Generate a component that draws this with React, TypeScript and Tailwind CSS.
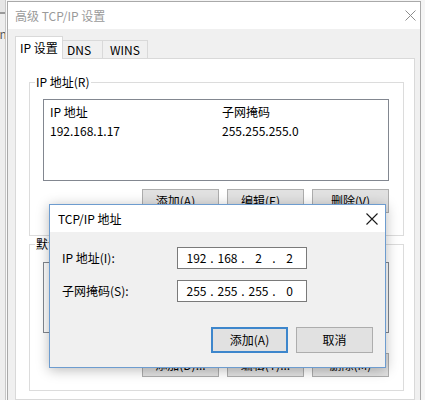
import React from "react";

function XIcon({ size, color, sw }: { size: number; color: string; sw: number }) {
  return (
    <svg width={size} height={size} viewBox={`0 0 ${size} ${size}`}>
      <path d={`M0.5 0.5L${size - 0.5} ${size - 0.5}M${size - 0.5} 0.5L0.5 ${size - 0.5}`} stroke={color} strokeWidth={sw} fill="none" />
    </svg>
  );
}

function Btn({ label, cls = "" }: { label: string; cls?: string }) {
  return (
    <div className={`w-[77px] h-[24px] flex items-center justify-center bg-[#e1e1e1] border border-[#adadad] text-black ${cls}`}>
      {label}
    </div>
  );
}

function IpField({ parts }: { parts: string[] }) {
  return (
    <div className="w-[130px] h-[22px] bg-white border border-[#7a7a7a] flex items-center pl-[6px] text-black">
      {parts.map((p, i) => (
        <React.Fragment key={i}>
          {i > 0 && <span className="w-[6px] text-center">.</span>}
          <span className="w-[25px] text-center">{p}</span>
        </React.Fragment>
      ))}
    </div>
  );
}

export default function App() {
  return (
    <div className="w-[425px] h-[400px] overflow-hidden relative flex bg-[#f5f5f5] text-[12px] leading-[16px] font-['Microsoft_YaHei_UI','Noto_Sans_CJK_SC',sans-serif] text-black">
      {/* background window sliver */}
      <div className="w-[7px] shrink-0 flex overflow-hidden">
        <div className="w-[5px] flex flex-col bg-[#eeeeee]">
          <div className="h-[12px] bg-[#e6e6e6]" />
          <div className="h-[2px] bg-[#9a9a9a]" />
          <div className="mt-[12px] -ml-[4px] text-[#555] whitespace-nowrap">In</div>
        </div>
        <div className="w-[1px] bg-[#c8c8c8]" />
        <div className="w-[1px] bg-[#fafafa]" />
      </div>

      {/* outer window */}
      <div className="w-[414px] shrink-0 mt-[1px] border border-b-0 border-[#a9a9a9] flex flex-col bg-[#f0f0f0]">
        <div className="h-[27px] bg-white flex items-center justify-between pl-[7px] pr-[4px]">
          <span className="text-[#9a9a9a]">高级 TCP/IP 设置</span>
          <XIcon size={11} color="#8c8c8c" sw={1} />
        </div>
        <div className="flex-1 flex flex-col pl-[7px] pr-[5px] pt-[7px]">
          {/* tabs */}
          <div className="flex items-end h-[23px]">
            <div className="relative z-10 w-[48px] h-[23px] bg-white border border-b-0 border-[#d9d9d9] flex items-center pl-[4px] pb-[1px]">
              IP 设置
            </div>
            <div className="w-[40px] h-[19px] bg-[#f0f0f0] border border-l-0 border-[#d9d9d9] flex items-center pl-[4px]">
              DNS
            </div>
            <div className="w-[45px] h-[19px] bg-[#f0f0f0] border border-l-0 border-[#d9d9d9] flex items-center justify-center">
              WINS
            </div>
          </div>
          {/* panel */}
          <div className="-mt-[1px] flex-1 bg-white border border-[#d9d9d9] pl-[13px] pr-[10px] pt-[15px]">
            <fieldset className="border border-[#dcdcdc] pl-[13px] pr-[14px] pb-[22px]">
              <legend className="-ml-[8px] px-[1px] leading-[16px]">IP 地址(R)</legend>
              <div className="mt-[9px] h-[82px] border border-[#828790] bg-white pt-[2px]">
                <div className="flex h-[19px] items-center pl-[6px]">
                  <span className="w-[172px]">IP 地址</span>
                  <span>子网掩码</span>
                </div>
                <div className="flex h-[20px] items-center pl-[6px]">
                  <span className="w-[172px]">192.168.1.17</span>
                  <span>255.255.255.0</span>
                </div>
              </div>
              <div className="mt-[8px] flex justify-end gap-[8px]">
                <Btn label="添加(A)..." />
                <Btn label="编辑(E)..." />
                <Btn label="删除(V)" />
              </div>
            </fieldset>
            <fieldset className="border border-[#dcdcdc] pl-[13px] pr-[14px] pb-[13px]">
              <legend className="-ml-[8px] px-[1px] leading-[16px]">默认网关(F):</legend>
              <div className="mt-[10px] h-[71px] border border-[#828790] bg-white" />
              <div className="mt-[20px] flex justify-end gap-[8px]">
                <Btn label="添加(D)..." />
                <Btn label="编辑(T)..." />
                <Btn label="删除(M)" />
              </div>
            </fieldset>
          </div>
        </div>
      </div>

      {/* TCP/IP 地址 dialog */}
      <div className="absolute left-[49px] top-[204px] w-[337px] h-[164px] border border-[#6d9ccf] bg-[#f0f0f0] flex flex-col shadow-[0_2px_12px_rgba(0,0,0,0.28)]">
        <div className="h-[27px] bg-white flex items-center justify-between pl-[8px] pr-[7px]">
          <span>TCP/IP 地址</span>
          <XIcon size={12} color="#1a1a1a" sw={1.1} />
        </div>
        <div className="flex-1 flex flex-col pl-[12px] pr-[12px] pt-[15px] pb-[14px]">
          <div className="flex items-center">
            <span className="w-[115px]">IP 地址(I):</span>
            <IpField parts={["192", "168", "2", "2"]} />
          </div>
          <div className="flex items-center mt-[11px]">
            <span className="w-[115px]">子网掩码(S):</span>
            <IpField parts={["255", "255", "255", "0"]} />
          </div>
          <div className="mt-auto flex justify-end gap-[8px]">
            <div className="w-[77px] h-[26px] flex items-center justify-center bg-[#e1e1e1] border-2 border-[#3d86cc]">
              添加(A)
            </div>
            <div className="w-[77px] h-[26px] flex items-center justify-center bg-[#e1e1e1] border border-[#adadad]">
              取消
            </div>
          </div>
        </div>
      </div>
    </div>
  );
}
